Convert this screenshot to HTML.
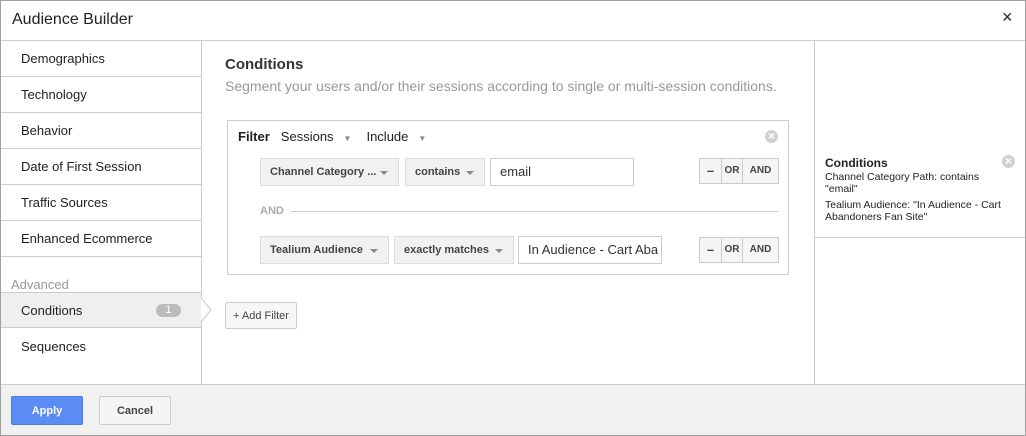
<!DOCTYPE html><html><head><style>
*{box-sizing:border-box;margin:0;padding:0}
body{width:1026px;height:436px;font-family:"Liberation Sans",Arial,sans-serif;background:#fff;position:relative;overflow:hidden;color:#222}
.a{position:absolute}
.frame{left:0;top:0;width:1026px;height:436px;border:1px solid #a0a0a0}
.side{font-size:13px;color:#222}
.si{position:absolute;left:1px;width:200px;height:36px;border-bottom:1px solid #ccc;padding-left:20px;line-height:35px}
.dd{position:absolute;background:#f1f1f1;border:1px solid #ddd;font-size:11px;font-weight:bold;color:#444;line-height:26px;padding-left:9px}
.dd:after{content:"";position:absolute;right:10px;top:12px;border:4px solid transparent;border-top:4px solid #888;border-bottom:0}
.inp{position:absolute;border:1px solid #ccc;font-size:13px;line-height:26px;padding-left:9px;color:#333;overflow:hidden;white-space:nowrap}
.bg{position:absolute;height:26px;border:1px solid #ccc;background:#f5f5f5;display:flex;font-size:10px;font-weight:bold;color:#444}
.bg div{line-height:24px;text-align:center;border-right:1px solid #ccc}
.bg div:last-child{border-right:0}
.x{position:absolute;width:13px;height:13px;border-radius:50%;background:#d0d0d0;color:#fff;font-size:12px;line-height:12px;text-align:center;font-weight:bold}
</style></head><body>
<div class="a frame"></div>
<div class="a" style="left:12px;top:11px;font-size:16px;color:#222">Audience Builder</div>
<div class="a" style="left:1002px;top:7px;font-size:18px;color:#222">×</div>
<div class="a" style="left:1px;top:40px;width:1024px;height:1px;background:#ccc"></div>
<div class="a" style="left:201px;top:41px;width:1px;height:343px;background:#ccc"></div>
<div class="a" style="left:814px;top:41px;width:1px;height:343px;background:#ccc"></div>
<div class="side">
<div class="si" style="top:41px">Demographics</div>
<div class="si" style="top:77px">Technology</div>
<div class="si" style="top:113px">Behavior</div>
<div class="si" style="top:149px">Date of First Session</div>
<div class="si" style="top:185px">Traffic Sources</div>
<div class="si" style="top:221px">Enhanced Ecommerce</div>
<div class="a" style="left:11px;top:277px;font-size:13px;color:#999">Advanced</div>
<div class="si" style="top:292px;background:#efefef;border-top:1px solid #ccc">Conditions</div>
<div class="a" style="left:156px;top:304px;width:25px;height:13px;border-radius:7px;background:#bbb;color:#fff;font-size:11px;text-align:center;line-height:13px">1</div>
<div class="si" style="top:329px;border:0">Sequences</div>
</div>
<svg class="a" style="left:200px;top:298px" width="12" height="24"><path d="M1 0 L11 12 L1 24" fill="#fff" stroke="#ccc"/></svg>
<div class="a" style="left:225px;top:56px;font-size:15px;font-weight:bold;color:#333">Conditions</div>
<div class="a" style="left:225px;top:78px;font-size:14px;color:#999">Segment your users and/or their sessions according to single or multi-session conditions.</div>
<div class="a" style="left:227px;top:120px;width:562px;height:155px;border:1px solid #ccc"></div>
<div class="a" style="left:238px;top:129px;font-size:13px"><b>Filter</b><span style="margin-left:11px">Sessions</span><span style="font-size:8px;color:#888;margin-left:10px">▼</span><span style="margin-left:15px">Include</span><span style="font-size:8px;color:#888;margin-left:10px">▼</span></div>
<div class="x" style="left:765px;top:130px">×</div>
<div class="dd" style="left:260px;top:158px;width:139px;height:28px">Channel Category ...</div>
<div class="dd" style="left:405px;top:158px;width:80px;height:28px">contains</div>
<div class="inp" style="left:490px;top:158px;width:144px;height:28px">email</div>
<div class="bg" style="left:699px;top:158px;width:80px"><div style="width:22px;font-size:13px">–</div><div style="width:21px">OR</div><div style="flex:1">AND</div></div>
<div class="a" style="left:260px;top:205px;font-size:11px;color:#aaa;font-weight:bold">AND</div>
<div class="a" style="left:291px;top:211px;width:487px;height:1px;background:#ccc"></div>
<div class="dd" style="left:260px;top:236px;width:129px;height:28px">Tealium Audience</div>
<div class="dd" style="left:394px;top:236px;width:120px;height:28px">exactly matches</div>
<div class="inp" style="left:518px;top:236px;width:144px;height:28px">In Audience - Cart Aba</div>
<div class="bg" style="left:699px;top:237px;width:80px"><div style="width:22px;font-size:13px">–</div><div style="width:21px">OR</div><div style="flex:1">AND</div></div>
<div class="a" style="left:225px;top:302px;width:72px;height:27px;border:1px solid #ccc;border-radius:2px;background:#f7f7f7;font-size:11px;color:#444;text-align:center;line-height:26px">+ Add Filter</div>
<div class="a" style="left:825px;top:156px;font-size:12px;font-weight:bold;color:#222">Conditions</div>
<div class="x" style="left:1002px;top:155px">×</div>
<div class="a" style="left:825px;top:172px;width:195px;font-size:10.5px;line-height:11.5px;color:#222">Channel Category Path: contains<br>"email"<div style="margin-top:5px">Tealium Audience: "In Audience - Cart<br>Abandoners Fan Site"</div></div>
<div class="a" style="left:815px;top:237px;width:210px;height:1px;background:#ccc"></div>
<div class="a" style="left:1px;top:384px;width:1024px;height:51px;background:#f1f1f1;border-top:1px solid #ccc"></div>
<div class="a" style="left:11px;top:396px;width:72px;height:29px;background:#5b8cf5;border:1px solid #4a7de0;border-radius:2px;color:#fff;font-size:11px;font-weight:bold;text-align:center;line-height:28px">Apply</div>
<div class="a" style="left:99px;top:396px;width:72px;height:29px;background:#f5f5f5;border:1px solid #ccc;border-radius:2px;color:#444;font-size:11px;font-weight:bold;text-align:center;line-height:28px">Cancel</div>
</body></html>
